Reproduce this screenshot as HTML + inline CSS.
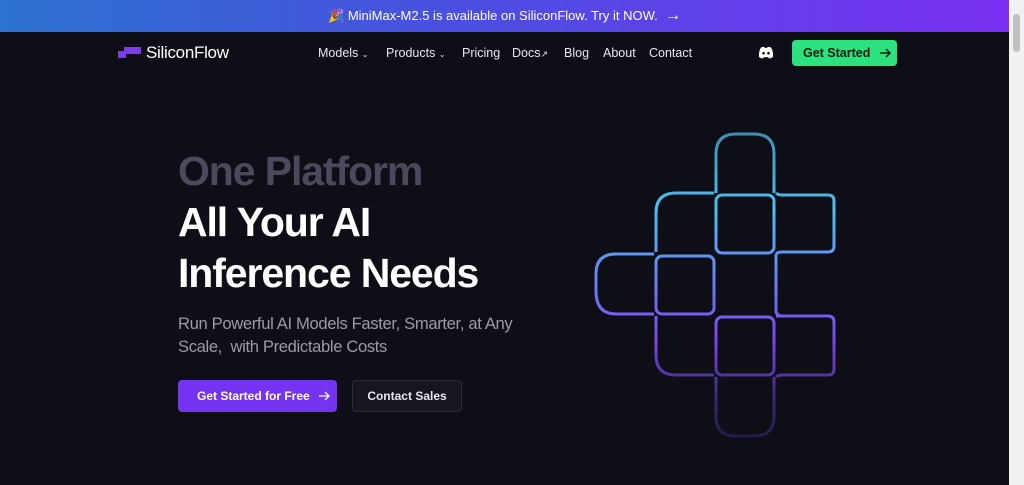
<!DOCTYPE html>
<html><head><meta charset="utf-8"><style>
*{margin:0;padding:0;box-sizing:border-box}
body{width:1024px;height:485px;overflow:hidden;background:#0d0e16;font-family:"Liberation Sans",sans-serif;position:relative}
.banner{position:absolute;left:0;top:0;width:1009px;height:32px;background:linear-gradient(90deg,#2c72cf,#4a4fe0 45%,#7a2ff2);color:#fff;font-size:13px;text-align:center;line-height:32px}
.sb{position:absolute;right:0;top:0;width:15px;height:485px;background:#f1f1f1}
.sb i{position:absolute;left:4px;top:14px;width:7px;height:38px;background:#c1c1c1;border-radius:4px}
.logo{position:absolute;left:146px;top:43px;color:#fff;font-size:17px;letter-spacing:-0.3px}
.links{position:absolute;top:46px;color:#e8e8ee;font-size:12.5px}
.links span{position:absolute;white-space:nowrap}
.gs{position:absolute;left:792px;top:40px;width:105px;height:26px;background:#2ce27e;border-radius:4px;color:#0b1a10;font-size:12.5px;font-weight:bold;line-height:26px;padding-left:11px;white-space:nowrap}
h1{position:absolute;left:178px;font-size:41px;font-weight:bold;letter-spacing:-1.1px;white-space:nowrap}
.sub{position:absolute;left:178px;top:312px;color:#9b9ba8;font-size:16.6px;line-height:23px;white-space:nowrap;letter-spacing:-0.35px}
.b1{position:absolute;left:178px;top:380px;width:159px;height:32px;background:#7333f0;border-radius:4px;color:#fff;font-size:12px;font-weight:bold;line-height:32px;padding-left:19px;white-space:nowrap}
.b2{position:absolute;left:352px;top:380px;width:110px;height:32px;background:#15161f;border:1px solid #2b2c37;border-radius:4px;color:#e8e8ee;font-size:12px;font-weight:bold;line-height:30px;text-align:center}
.ar{display:inline-block;vertical-align:top}
</style></head><body>
<div class="banner">🎉 MiniMax-M2.5 is available on SiliconFlow. Try it NOW. &nbsp;<span style="font-size:16px">→</span></div>
<div class="sb"><i></i></div>
<svg style="position:absolute;left:118px;top:47px" width="24" height="12"><rect x="0" y="4" width="8" height="7" fill="#7a3cf3"/><rect x="6" y="0" width="17" height="7" fill="#7a3cf3"/></svg>
<div class="logo">SiliconFlow</div>
<div class="links">
<span style="left:318px">Models <small style="font-size:8px">⌄</small></span>
<span style="left:386px">Products <small style="font-size:8px">⌄</small></span>
<span style="left:462px">Pricing</span>
<span style="left:512px">Docs<small style="font-size:9px">↗</small></span>
<span style="left:564px">Blog</span>
<span style="left:603px">About</span>
<span style="left:649px">Contact</span>
</div>
<svg style="position:absolute;left:758px;top:46px" width="16" height="13" viewBox="0 0 16 13"><path d="M3 1.5 Q5.5 0.5 6.5 1 L7 2 Q8 1.8 9 2 L9.5 1 Q10.5 0.5 13 1.5 Q15.5 5.5 15 11 Q13 12.5 11 12.5 L10 11 Q8 11.6 6 11 L5 12.5 Q3 12.5 1 11 Q0.5 5.5 3 1.5Z" fill="#fff"/><circle cx="5.5" cy="7.2" r="1.3" fill="#0d0e16"/><circle cx="10.5" cy="7.2" r="1.3" fill="#0d0e16"/></svg>
<div class="gs">Get Started<svg class="ar" style="margin:8px 0 0 9px" width="12" height="10" viewBox="0 0 12 10"><path d="M1 5H11M7 1L11 5L7 9" fill="none" stroke="#0b1a10" stroke-width="1.5"/></svg></div>
<h1 style="top:148px;color:#4a4a5c">One Platform</h1>
<h1 style="top:199px;color:#fff">All Your AI</h1>
<h1 style="top:250px;color:#fff">Inference Needs</h1>
<div class="sub">Run Powerful AI Models Faster, Smarter, at Any<br>Scale,&nbsp; with Predictable Costs</div>
<div class="b1">Get Started for Free <svg class="ar" style="margin:11px 0 0 5px" width="12" height="10" viewBox="0 0 12 10"><path d="M1 5H11M7 1L11 5L7 9" fill="none" stroke="#fff" stroke-width="1.3"/></svg></div>
<div class="b2">Contact Sales</div>
<svg style="position:absolute;left:0;top:0" width="1009" height="485">
<defs><linearGradient id="g" gradientUnits="userSpaceOnUse" x1="0" y1="132" x2="0" y2="440">
<stop offset="0" stop-color="#3a8fb0"/><stop offset="0.25" stop-color="#4fbef0"/><stop offset="0.5" stop-color="#6a7af2"/><stop offset="0.68" stop-color="#7b45e8"/><stop offset="0.85" stop-color="#3e2a7a"/><stop offset="1" stop-color="#221a45"/></linearGradient></defs>
<g fill="none" stroke="url(#g)" stroke-width="3">
<path d="M716 193 V154 Q716 134 736 134 H754 Q774 134 774 154 V193"/>
<rect x="716" y="195" width="58" height="58" rx="6"/>
<path d="M714 193 H676 Q656 193 656 213 V252"/>
<path d="M776 193 Q778 195 782 195 H828 Q834 195 834 201 V246 Q834 252 828 252 H782 Q778 252 776 254"/>
<path d="M654 254 H616 Q596 254 596 274 V291 Q596 314 616 314 H654"/>
<rect x="656" y="256" width="58" height="58" rx="6"/>
<path d="M776 254 V310 Q776 316 782 316"/>
<path d="M656 316 V355 Q656 375 676 375 H714"/>
<rect x="716" y="317" width="58" height="58" rx="6"/>
<path d="M776 316 H828 Q834 316 834 322 V369 Q834 375 828 375 H782 Q778 375 776 377"/>
<path d="M716 377 V416 Q716 436 736 436 H754 Q774 436 774 416 V377"/>
</g></svg>
</body></html>
